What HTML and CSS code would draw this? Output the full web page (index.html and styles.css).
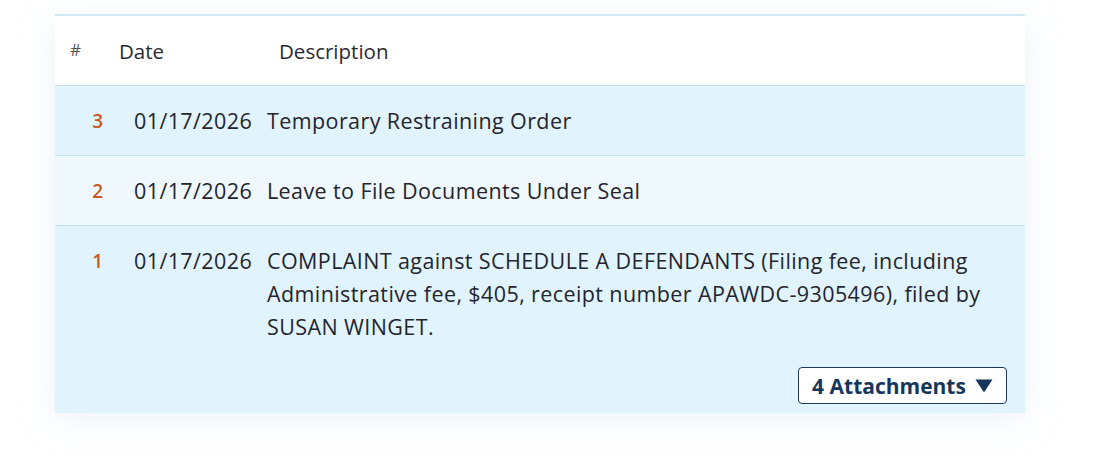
FILE: index.html
```html
<!DOCTYPE html>
<html>
<head>
<meta charset="utf-8">
<link rel="stylesheet" href="styles.css">
</head>
<body>
<div class="page">
  <div class="docket">
    <div class="head">
      <span class="h-num">#</span>
      <span class="h-date">Date</span>
      <span class="h-desc">Description</span>
    </div>
    <div class="row row-a">
      <span class="num">3</span>
      <span class="date">01/17/2026</span>
      <div class="desc">Temporary Restraining Order</div>
    </div>
    <div class="row row-b">
      <span class="num">2</span>
      <span class="date">01/17/2026</span>
      <div class="desc">Leave to File Documents Under Seal</div>
    </div>
    <div class="row row-a row-last">
      <span class="num">1</span>
      <span class="date">01/17/2026</span>
      <div class="desc">
        <p class="desc-text">COMPLAINT against SCHEDULE A DEFENDANTS (Filing fee, including Administrative fee, $405, receipt number APAWDC-9305496), filed by SUSAN WINGET.</p>
        <div class="attach-wrap"><button class="attach">4 Attachments <svg class="tri" width="18" height="14" viewBox="0 0 18 14"><path d="M0.5 0.5 H17.5 L9 13.5 Z" fill="#16365c"/></svg></button></div>
      </div>
    </div>
  </div>
</div>
</body>
</html>
```
FILE: styles.css
```css
html, body {
  margin: 0;
  padding: 0;
  background: #ffffff;
}
body {
  font-family: "Open Sans", "Noto Sans", sans-serif;
  color: #24242e;
  width: 1098px;
  height: 458px;
  overflow: hidden;
}
.page {
  padding: 14px 73px 0 55px;
}
.docket {
  width: 970px;
  border-top: 2px solid #cfe9f5;
  box-shadow: 0 6px 30px rgba(200, 220, 235, 0.35);
}
.head {
  display: flex;
  align-items: center;
  height: 69px;
  font-size: 20.5px;
  color: #2a2a33;
  background: #ffffff;
}
.h-num {
  width: 15px;
  margin-left: 15px;
  font-size: 17px;
  color: #555;
  margin-top: -3px;
}
.h-date {
  margin-left: 34px;
  width: 160px;
}
.row {
  display: flex;
  align-items: flex-start;
  border-top: 1px solid #bfe3f3;
  font-size: 21.5px;
  min-height: 69px;
}
.row-a { background: #e1f4fd; }
.row-b { background: #eef8fd; }
.num {
  width: 48px;
  text-align: right;
  color: #c9581e;
  font-weight: 600;
  padding-top: 19px;
  line-height: 33px;
  font-size: 19px;
}
.date {
  margin-left: 31px;
  width: 133px;
  padding-top: 18px;
  line-height: 33px;
  letter-spacing: 0.4px;
}
.desc {
  flex: 1;
  padding-top: 18px;
  padding-right: 18px;
  line-height: 33px;
  letter-spacing: 0.4px;
}
.desc-text {
  margin: 0;
}
.attach-wrap {
  display: flex;
  justify-content: flex-end;
  padding-top: 24px;
  padding-bottom: 9px;
  margin-right: 0;
  letter-spacing: 0;
}
.attach {
  font-family: "Open Sans", "Noto Sans", sans-serif;
  font-weight: 700;
  font-size: 21px;
  color: #16365c;
  background: #ffffff;
  border: 1.5px solid #1d3a5e;
  border-radius: 4px;
  height: 37px;
  width: 209px;
  padding: 0 10px;
  display: flex;
  align-items: center;
  justify-content: center;
  gap: 9px;
}
.tri {
  display: block;
  margin-top: 1px;
}
```
